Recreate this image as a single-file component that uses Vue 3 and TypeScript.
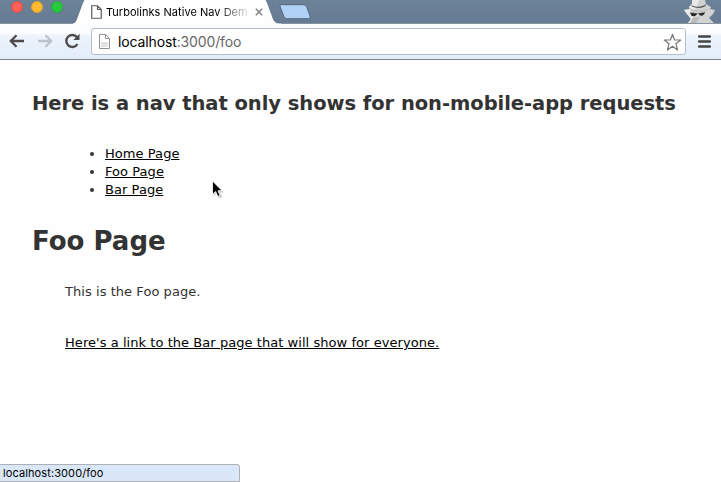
<script setup lang="ts">
interface NavLink {
  label: string
  key: string
}

const links: NavLink[] = [
  { label: 'Home Page', key: 'home' },
  { label: 'Foo Page', key: 'foo' },
  { label: 'Bar Page', key: 'bar' },
]
</script>

<template>
  <div class="window">
    <header class="strip">
      <div class="lights">
        <span class="light red"></span>
        <span class="light yellow"></span>
        <span class="light green"></span>
      </div>
      <div class="tab">
        <svg class="tab-shape" width="208" height="24" viewBox="0 0 208 24">
          <path d="M0 24V23C2 23 3 21 4 18L9.500 3L11 0H193L194.500 3L200 18C201.500 22 203 23 206 23H208V24Z" fill="#fefefe" />
          <path d="M0 23C2 23 3 21 4 18L9.500 3L11 0M193 0L194.500 3L200 18C201.500 22 203 23 206 23H208" fill="none" stroke="#53677e" stroke-width=".7" />
        </svg>
        <svg class="tab-doc" width="11" height="14" viewBox="0 0 11 14">
          <path d="M.75.75H6.500L10.250 4.500V13.250H.75ZM6.500.75V4.500H10.250" fill="#fff" stroke="#5c5c5c" stroke-width="1.200" />
        </svg>
        <span class="tab-title">Turbolinks Native Nav Dem</span>
        <svg class="tab-close" width="8" height="8" viewBox="0 0 8 8">
          <path d="M.8.8L7.200 7.200M7.200.8L.8 7.200" stroke="#858585" stroke-width="1.500" />
        </svg>
      </div>
      <svg class="new-tab" width="34" height="16" viewBox="0 0 34 16">
        <path d="M3.500.7H25C27 .7 28 1.500 28.700 3L32 12C32.500 14 32 14.700 30.500 14.700H9.500C7.500 14.700 6.700 14 6 12.500L2.200 3C1.600 1.500 2 .7 3.500.7Z" fill="#b1d2f7" stroke="#56697f" />
      </svg>
      <svg class="incognito" width="38" height="23" viewBox="0 0 38 23">
        <path d="M10 0H23L24 4L29 7L28 9L33 10L31 14L27 18L32 23H6L9 19L5 14L2 10L8 9L7 7L10 4Z" fill="#d2d2d2" />
        <path d="M10 0H17L14 8L10 12L9 15L12 19L8 23H6L9 19L5 14L2 10L8 9L7 7L10 4Z" fill="#e9e9e9" />
        <path d="M9 5C14 7.500 20 7.500 24 4L23.500 6C20 8.500 14 8.500 10 6.500Z" fill="#555" />
        <path d="M7 8C14 11 22 11 28 8L24 12H10Z" fill="#c7c7c7" />
        <path d="M8 12.200C13 13.500 19 13 23 12V13.500H8Z" fill="#666" />
        <path d="M8.500 13L15 13.500C14.500 16.500 10.500 17 9 15ZM16.500 13.500L22.500 12.800C22 16 18 17 16.500 13.500Z" fill="#252525" />
        <path d="M11 18L18 17L14 23H8Z" fill="#bababa" />
      </svg>
    </header>

    <div class="toolbar">
      <svg class="arrow" width="16" height="14" viewBox="0 0 16 14">
        <path d="M15 7H2M7.500 1.300L1.800 7L7.500 12.700" fill="none" stroke="#4c4c4c" stroke-width="2.300" />
      </svg>
      <svg class="arrow forward" width="16" height="14" viewBox="0 0 16 14">
        <path d="M1 7H14M8.500 1.300L14.200 7L8.500 12.700" fill="none" stroke="#bcc2ca" stroke-width="2.300" />
      </svg>
      <svg class="reload" width="16" height="16" viewBox="0 0 16 16">
        <path d="M13 4.200A6 6 0 1 0 13.500 11" fill="none" stroke="#4c4c4c" stroke-width="2.400" />
        <path d="M15.500.8V7H9.300Z" fill="#4c4c4c" />
      </svg>
      <div class="address">
        <svg class="page-icon" width="11" height="15" viewBox="0 0 11 15">
          <path d="M.5.500H6.500L10.500 4.500V14.500H.5ZM6.500.5V4.500H10.500" fill="#fff" stroke="#929292" />
          <path d="M2 8H9V13H2Z" fill="#e2e2e2" />
        </svg>
        <span class="url">localhost<span class="url-rest">:3000/foo</span></span>
        <svg class="star" width="19" height="19" viewBox="0 0 19 19">
          <path d="M9.500 1.300L11.600 7H17.800L12.900 10.700L14.600 17L9.500 13.300L4.400 17L6.100 10.700L1.200 7H7.400Z" fill="#fff" stroke="#777" stroke-width="1.200" stroke-linejoin="round" />
        </svg>
      </div>
      <svg class="menu" width="13" height="13" viewBox="0 0 13 13">
        <path d="M1.200 1.500H11.800M1.200 6.500H11.800M1.200 11.500H11.800" stroke="#444" stroke-width="2.500" stroke-linecap="round" />
      </svg>
    </div>

    <main class="page">
      <h2>Here is a nav that only shows for non-mobile-app requests</h2>
      <ul>
        <li v-for="link in links" :key="link.key"><a :class="link.key">{{ link.label }}</a></li>
      </ul>
      <h1>Foo Page</h1>
      <p class="intro">This is the Foo page.</p>
      <p class="more"><a>Here's a link to the Bar page that will show for everyone.</a></p>
    </main>

    <div class="status">localhost:3000/foo</div>
    <svg class="cursor" width="14" height="20" viewBox="0 0 14 20">
      <path d="M2.500 3V16L5.500 13.300L8 18.500L11.500 16.800L9 12.500H13Z" fill="#999" opacity=".5" />
      <path d="M1.500 1V14.300L4.700 11.500L6.800 16.500L9 15.500L7 10.700H11Z" fill="#000" stroke="#fff" stroke-width=".8" />
    </svg>
  </div>
</template>

<style>
body {
  margin: 0;
  background: #fefefe;
}
</style>

<style scoped>
.window {
  position: relative;
  box-sizing: border-box;
  width: 721px;
  height: 482px;
  overflow: hidden;
  background: #fefefe;
  font-family: "DejaVu Sans", Verdana, sans-serif;
  color: #333;
}
svg {
  display: block;
  flex: none;
}
.strip {
  display: flex;
  height: 24px;
  background: linear-gradient(#6c8299, #667b93);
  box-shadow: inset 0 -1px #8792a0;
}
.lights {
  display: flex;
  gap: 8px;
  width: 63px;
  padding-left: 11px;
}
.light {
  box-sizing: border-box;
  width: 12px;
  height: 12px;
  margin-top: 1px;
  border-radius: 50%;
}
.red { background: #fc6058; border: 1px solid #e14942; }
.yellow { background: #fdbc2f; border: 1px solid #dda02b; }
.green { background: #28c940; border: 1px solid #20ac33; }
.tab {
  position: relative;
  display: flex;
  width: 208px;
  height: 24px;
  margin-left: -1px;
}
.tab-shape {
  position: absolute;
  inset: 0;
}
.tab-doc, .tab-title, .tab-close {
  position: relative;
}
.tab-doc { margin: 5px 0 0 18px; }
.tab-title {
  width: 145px;
  height: 18px;
  margin: 3px 0 0 4px;
  font: 11px/18px Inter, sans-serif;
  letter-spacing: .03px;
  white-space: nowrap;
  color: #000;
  -webkit-mask-image: linear-gradient(90deg, #000 112px, transparent 145px);
  mask-image: linear-gradient(90deg, #000 112px, transparent 145px);
}
.tab-close { margin: 8px 0 0 4px; }
.new-tab { margin: 4px 0 0 -3px; }
.incognito { margin-left: auto; margin-right: 1px; }
.toolbar {
  display: flex;
  box-sizing: border-box;
  height: 36px;
  padding-left: 9px;
  border-bottom: 1px solid #7b838d;
  background: linear-gradient(#fcfdfe 0, #fcfdfe 9px, #ecf3fc 12px, #e3edf9 100%);
}
.arrow { margin-top: 10px; }
.forward { margin-left: 12px; }
.reload { margin: 9px 0 0 11px; }
.address {
  display: flex;
  box-sizing: border-box;
  width: 595px;
  height: 27px;
  margin: 4px 0 0 11px;
  border: 1px solid #b4bdca;
  border-radius: 3px;
  background: #fff;
}
.page-icon { margin: 5px 0 0 7px; }
.url {
  width: 530px;
  margin-left: 8px;
  font: 14px/26px Inter, sans-serif;
  letter-spacing: -.13px;
  color: #000;
}
.url-rest { color: #666; }
.star { margin: 4px 0 0 15px; }
.menu { margin: 11px 0 0 12px; }
.page {
  display: flow-root;
  padding-left: 32px;
  font-size: 13px;
  line-height: 18px;
  letter-spacing: .055px;
}
h1, h2, p, ul { margin: 0; }
h2 {
  margin-top: 35px;
  font-size: 19.5px;
  line-height: 18px;
  letter-spacing: -.04px;
  white-space: nowrap;
}
ul {
  margin-top: 32px;
  padding-left: 73px;
}
h1 {
  margin-top: 32px;
  font-size: 26px;
  line-height: 20px;
  letter-spacing: 0;
}
.intro, .more {
  margin-left: 33px;
}
.intro { margin-top: 32px; }
.more { margin-top: 33px; }
a {
  color: #000;
  text-decoration: underline;
}
.status {
  position: absolute;
  bottom: 0;
  left: -1px;
  box-sizing: border-box;
  width: 241px;
  height: 18px;
  padding-left: 3px;
  border: 1px solid #acb1b8;
  border-radius: 0 3px 0 0;
  background: #d9e7f8;
  font: 11px/17px Inter, sans-serif;
  letter-spacing: .1px;
  color: #000;
}
.cursor {
  position: absolute;
  top: 180px;
  left: 211px;
}
</style>
